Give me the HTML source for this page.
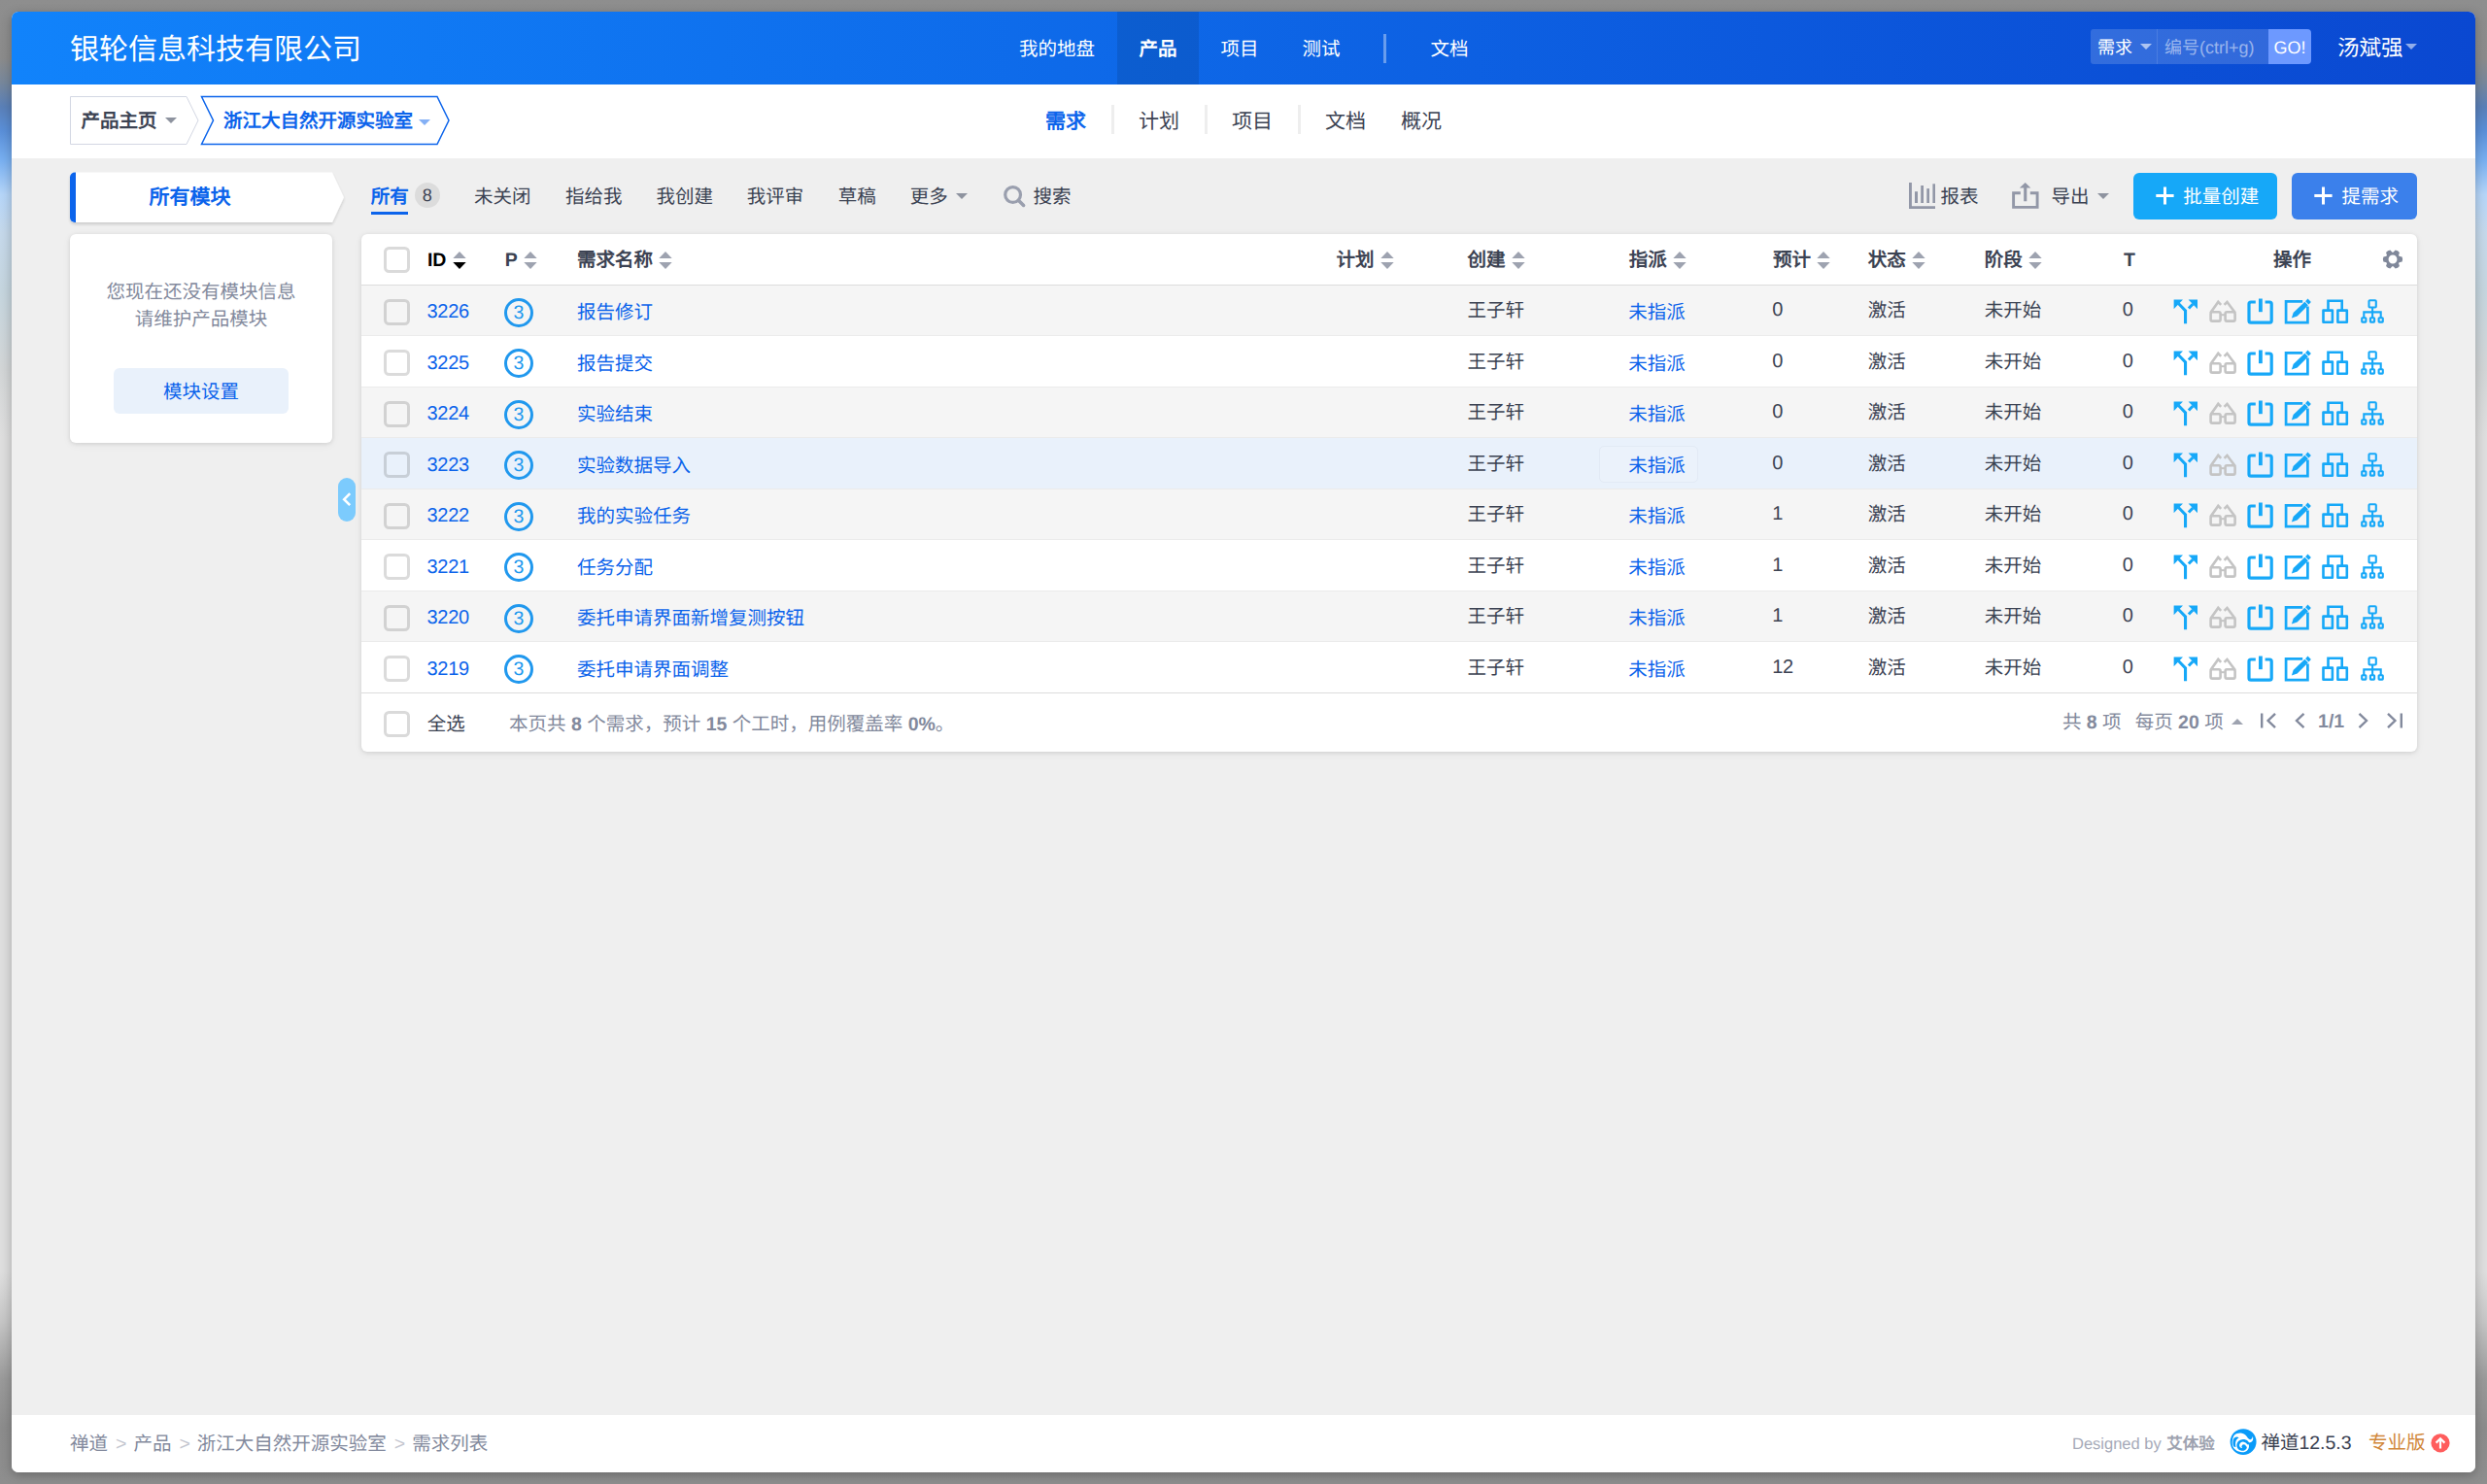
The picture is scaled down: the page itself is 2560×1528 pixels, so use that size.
<!DOCTYPE html>
<html lang="zh-CN">
<head>
<meta charset="utf-8">
<title>需求列表</title>
<style>
*{box-sizing:border-box;margin:0;padding:0}
html,body{width:2560px;height:1528px;overflow:hidden}
body{font-family:"Liberation Sans",sans-serif;font-size:19.5px;color:#3c4353;position:relative;text-rendering:geometricPrecision;
background:linear-gradient(to bottom,#8e8e8e 0px,#8b8b8b 60px,#77879b 85px,#5a80b8 110px,#5a8fd8 135px,#78aff0 165px,#b5d5f8 200px,#c5d8ea 240px,#c5d5de 300px,#d2d5d6 380px,#dedede 450px,#dedede 1310px,#c6c6c6 1360px,#9a9a9a 1420px,#8c8c8c 1470px,#8e8e8e 1528px);}
.abs,.t{position:absolute}
.t{white-space:nowrap}
#win{position:absolute;left:12px;top:12px;width:2536px;height:1504px;border-radius:7px;overflow:hidden;background:#efefef}
#winshadow{position:absolute;left:12px;top:12px;width:2536px;height:1504px;border-radius:7px;box-shadow:0 3px 11px rgba(0,0,0,.25)}
#header{position:absolute;left:0;top:0;width:2536px;height:75px;background:linear-gradient(to right,#1183fb 0%,#0a48d1 100%);color:#fff}
#title{position:absolute;left:60px;top:0;height:75px;line-height:79px;font-size:30px;white-space:nowrap}
.nav{position:absolute;top:0;height:75px;line-height:79px;text-align:center;font-size:19.5px;white-space:nowrap}
.nav.on{background:rgba(0,0,0,.10);font-weight:bold}
#sub{position:absolute;left:0;top:75px;width:2536px;height:76px;background:#fff}
.sn{position:absolute;top:0;height:76px;line-height:78.5px;font-size:21px;white-space:nowrap;color:#3c4353}
.sn.on{color:#0c64eb;font-weight:bold}
.sd{position:absolute;top:21px;width:3px;height:30px;background:#eee}
.caret{width:0;height:0;border-left:6px solid transparent;border-right:6px solid transparent;border-top:6px solid #8e939f}
#footer{position:absolute;left:0;top:1445px;width:2536px;height:59px;background:#fff;color:#838a9d;white-space:nowrap}
.tab{position:absolute;top:166.5px;height:48px;line-height:48px;white-space:nowrap;color:#3c4353}
.btn{position:absolute;top:166px;height:48px;border-radius:6px;color:#fff}
#table{position:absolute;left:360px;top:229px;width:2116px;height:533px;background:#fff;border-radius:6px;box-shadow:0 1px 4px rgba(0,0,0,.10),0 2px 10px rgba(0,0,0,.05);overflow:hidden}
.row{position:absolute;left:0;width:2116px;border-bottom:1px solid #ebebeb}
.row.g{background:#f5f5f5}
.row.h{background:#e9f1fb}
.row .t,.th{top:0;line-height:inherit}
.th{position:absolute;white-space:nowrap;font-weight:bold;color:#3c4353}
.cb{position:absolute;left:23px;width:27px;height:27px;border:3px solid rgba(0,0,0,.14);border-radius:5.5px}
.lk{color:#0c64eb}
.n{font-size:20px;letter-spacing:-.3px}
.row .n{top:-1px}
.row .u{top:-1.7px}
.row .u2{top:-2.7px}
.pri{position:absolute;left:147px;width:30px;height:30px;border:3px solid #2098ee;border-radius:50%;color:#2098ee;text-align:center;line-height:24.5px;font-size:19.5px}
.gray{color:#838a9d}
</style>
</head>
<body>

<svg width="0" height="0" style="position:absolute">
 <defs>
  <g id="i-split" fill="#16a8f8" stroke="none">
    <path d="M5.6 2.4H15V2.6L5.8 12H5.6Z"/>
    <path d="M20.6 2.4H30V11.9H29.8L20.6 2.6Z"/>
    <path d="M9.4 7.6L11.5 5.5L19.1 13.3V27.3H16V14.6Z"/>
    <path d="M24.2 5.9L26.4 8.1L22 12.6L19.8 10.4Z"/>
  </g>
  <g id="i-glass" fill="none" stroke="#c4c4c4" stroke-width="2.6" stroke-linejoin="round">
    <rect x="43.6" y="15.3" width="10" height="9.3" rx="1.6"/>
    <rect x="58.6" y="15.3" width="10" height="9.3" rx="1.6"/>
    <path d="M53.6 18.2H58.6" stroke-width="2"/>
    <path d="M43.4 16L51.3 4.9L54.2 7.9" stroke-linejoin="miter" stroke-linecap="butt"/>
    <path d="M68.8 16L60.5 4.9L57.6 7.9" stroke-linejoin="miter" stroke-linecap="butt"/>
  </g>
  <g id="i-power" fill="none" stroke="#16a8f8">
    <path d="M89.8 5H85A2 2 0 0 0 83 7V24.2A2 2 0 0 0 85 26.2H104.2A2 2 0 0 0 106.2 24.2V7A2 2 0 0 0 104.2 5H99.6" stroke-width="3.2"/>
    <path d="M94.9 1.5V15.2" stroke-width="3.8"/>
  </g>
  <g id="i-edit">
    <path d="M138.2 4.3H121.1V26.2H143.4V9.6" fill="none" stroke="#16a8f8" stroke-width="2.7"/>
    <path d="M126.9 21.4L128.6 15.9L140.4 4.8L143.9 8.3L132.7 19.6Z" fill="#16a8f8"/>
    <path d="M141.1 4.2L143.5 1.6L146.9 5L144.5 7.6Z" fill="#16a8f8"/>
  </g>
  <g id="i-boxes" fill="none" stroke="#16a8f8" stroke-width="2.6" stroke-linejoin="round">
    <rect x="159.5" y="13.6" width="9.4" height="12.1"/>
    <rect x="174.4" y="13.6" width="9.4" height="12.1"/>
    <path d="M164.5 13.5V3.8H178.7V13.5" stroke-linejoin="miter"/>
  </g>
  <g id="i-site" fill="none" stroke="#16a8f8" stroke-width="2.1" stroke-linejoin="round">
    <rect x="206.5" y="3.2" width="7.3" height="7.3" rx="1"/>
    <rect x="199.2" y="21.2" width="4.2" height="4.4" rx=".6"/>
    <rect x="207.9" y="21.2" width="4.2" height="4.4" rx=".6"/>
    <rect x="216.6" y="21.2" width="4.2" height="4.4" rx=".6"/>
    <path d="M210.1 10.5V21M201.3 21V15.4H218.7V21" stroke-linejoin="miter"/>
  </g>
  <g id="acts"><use href="#i-split"/><use href="#i-glass"/><use href="#i-power"/><use href="#i-edit"/><use href="#i-boxes"/><use href="#i-site"/></g>
 </defs>
</svg>
<div id="winshadow"></div>
<div id="win">
<div id="header">
<div id="title">银轮信息科技有限公司</div>
<div class="nav" style="left:1014px;width:124px">我的地盘</div>
<div class="nav on" style="left:1138px;width:84px">产品</div>
<div class="nav" style="left:1222px;width:84px">项目</div>
<div class="nav" style="left:1306px;width:84px">测试</div>
<div class="abs" style="left:1412px;top:23px;width:3px;height:30px;background:rgba(255,255,255,.38)"></div>
<div class="nav" style="left:1438px;width:84px">文档</div>
<div class="abs" style="left:2140px;top:18px;width:183px;height:36px;background:rgba(255,255,255,.16);border-radius:3px 0 0 3px"></div>
<div class="abs" style="left:2208px;top:18px;width:1px;height:36px;background:rgba(255,255,255,.12)"></div>
<div class="t" style="left:2147px;top:18px;height:36px;line-height:39px;font-size:18px">需求</div>
<div class="abs caret" style="left:2191px;top:33px;border-top-color:rgba(255,255,255,.6)"></div>
<div class="t" style="left:2216px;top:18px;height:36px;line-height:39px;font-size:18px;color:rgba(255,255,255,.5)">编号(ctrl+g)</div>
<div class="abs" style="left:2323px;top:18px;width:44px;height:36px;line-height:38px;font-size:18px;background:#6d99ff;border-radius:0 4px 4px 0;text-align:center">GO!</div>
<div class="t" style="left:2394px;top:0;height:75px;line-height:76px;font-size:22.5px">汤斌强</div>
<div class="abs caret" style="left:2464px;top:33px;border-top-color:rgba(255,255,255,.55)"></div>
</div>
<div id="sub">
<svg class="abs" style="left:0;top:0" width="520" height="76" viewBox="0 0 520 76">
<path d="M60.5 12.5H180L192 37L180 61.5H60.5Z" fill="#fff" stroke="#d3d7e3" stroke-width="1"/>
<path d="M195.5 12.5H438L450 37L438 61.5H195.5L207.5 37Z" fill="#fff" stroke="#0c64eb" stroke-width="1.5"/>
<path d="M158 34h12l-6 6z" fill="#8e939f"/>
<path d="M419 36h12l-6 6z" fill="#84b0f5"/>
</svg>
<div class="t" style="left:71.5px;top:12px;height:50px;line-height:53px;font-weight:bold;color:#3c4353">产品主页</div>
<div class="t" style="left:218px;top:12px;height:50px;line-height:53px;font-weight:bold;color:#0c64eb">浙江大自然开源实验室</div>
<div class="sn on" style="left:1064px">需求</div>
<div class="sd" style="left:1132px"></div>
<div class="sn" style="left:1160px">计划</div>
<div class="sd" style="left:1228px"></div>
<div class="sn" style="left:1256px">项目</div>
<div class="sd" style="left:1324px"></div>
<div class="sn" style="left:1352px">文档</div>
<div class="sn" style="left:1430px">概况</div>
</div>
<svg class="abs" style="left:54px;top:160px" width="300" height="66" viewBox="0 0 300 66">
<defs><filter id="sh1" x="-5%" y="-20%" width="110%" height="150%"><feGaussianBlur in="SourceAlpha" stdDeviation="1.6"/><feOffset dy="1.5"/><feComponentTransfer><feFuncA type="linear" slope=".16"/></feComponentTransfer><feMerge><feMergeNode/><feMergeNode in="SourceGraphic"/></feMerge></filter></defs>
<path d="M11 5.5H276L288 31.3L276 57H11A5 5 0 0 1 6 52V10.5A5 5 0 0 1 11 5.5Z" fill="#fff" filter="url(#sh1)"/>
<path d="M12 5.5H11A5 5 0 0 0 6 10.5V52A5 5 0 0 0 11 57H12Z" fill="#0c64eb"/>
</svg>
<div class="t" style="left:141.5px;top:165.5px;height:52px;line-height:51px;font-size:21px;font-weight:bold;color:#0c64eb">所有模块</div>
<div class="abs" style="left:60px;top:229px;width:270px;height:215px;background:#fff;border-radius:6px;box-shadow:0 1px 4px rgba(0,0,0,.10),0 2px 10px rgba(0,0,0,.05)"></div>
<div class="t gray" style="left:60px;top:274.5px;width:270px;text-align:center;line-height:28.3px">您现在还没有模块信息<br>请维护产品模块</div>
<div class="abs" style="left:105.3px;top:367px;width:179.5px;height:46.5px;background:#e9f1fb;border-radius:6px;color:#0c64eb;text-align:center;line-height:50px">模块设置</div>
<div class="abs" style="left:336px;top:480px;width:18px;height:44.5px;background:#7ccbfd;border-radius:9px"></div>
<svg class="abs" style="left:336px;top:480px" width="18" height="45" viewBox="0 0 18 45"><path d="M12.2 16.2L6.2 22.2L12.2 28.2" fill="none" stroke="#fff" stroke-width="2.6"/></svg>
<div class="tab" style="left:369.8px;font-weight:bold;color:#0c64eb">所有</div>
<div class="abs" style="left:369.8px;top:206px;width:38.6px;height:3px;background:#0c64eb"></div>
<div class="abs" style="left:414.8px;top:176.3px;width:26px;height:26px;border-radius:13px;background:#dcdcdc;text-align:center;line-height:26px;font-size:18px;color:#3c4353">8</div>
<div class="tab" style="left:476px">未关闭</div>
<div class="tab" style="left:569.9px">指给我</div>
<div class="tab" style="left:663.5px">我创建</div>
<div class="tab" style="left:756.8px">我评审</div>
<div class="tab" style="left:850.7px">草稿</div>
<div class="tab" style="left:924.7px">更多</div>
<div class="abs caret" style="left:972px;top:187px"></div>
<svg class="abs" style="left:1018px;top:176px" width="28" height="28" viewBox="0 0 28 28"><circle cx="12.6" cy="12.5" r="7.9" fill="none" stroke="#9a9fae" stroke-width="3.2"/><path d="M18.6 18.4L23.6 23.4" stroke="#9a9fae" stroke-width="3.6" stroke-linecap="round"/></svg>
<div class="tab" style="left:1051.5px">搜索</div>
<svg class="abs" style="left:1948px;top:172px" width="36" height="34" viewBox="0 0 36 34" fill="#9297a7"><path d="M5 4H7.9V28.2H32V30.9H5Z"/><rect x="11" y="13.2" width="3" height="11.8"/><rect x="17.2" y="7" width="2.8" height="18"/><rect x="23.3" y="10.1" width="2.7" height="14.9"/><rect x="29.4" y="5.3" width="2.6" height="19.7"/></svg>
<div class="tab" style="left:1985.5px">报表</div>
<svg class="abs" style="left:2056px;top:172px" width="36" height="34" viewBox="0 0 36 34"><path d="M11.8 14.8H4.6V29.4H29.1V14.8H21.8" fill="none" stroke="#9297a7" stroke-width="2.9"/><path d="M15.2 9.6H10.8L16.7 3.9L22.4 9.6H18.3V23.2H15.2Z" fill="#9297a7"/></svg>
<div class="tab" style="left:2099.5px">导出</div>
<div class="abs caret" style="left:2147px;top:187px"></div>
<div class="btn" style="left:2184px;width:148px;background:#16a8f8"></div>
<svg class="abs" style="left:2206px;top:179px" width="22" height="22" viewBox="0 0 22 22"><path d="M1.3 10.5H19.6M10.5 1.4V19.5" stroke="#fff" stroke-width="3"/></svg>
<div class="tab" style="left:2235.3px;color:#fff">批量创建</div>
<div class="btn" style="left:2347px;width:129px;background:#3b80eb"></div>
<svg class="abs" style="left:2369px;top:179px" width="22" height="22" viewBox="0 0 22 22"><path d="M1.3 10.5H19.6M10.5 1.4V19.5" stroke="#fff" stroke-width="3"/></svg>
<div class="tab" style="left:2398.6px;color:#fff">提需求</div>
<div id="table">
<div class="abs" style="left:0;top:0;width:2116px;height:53px;border-bottom:1px solid #dcdcdc;line-height:54px">
<div class="cb" style="top:13px;border-color:#dadada"></div>
<div class="th" style="left:67.9px;top:0;color:#000">ID</div><svg class="abs" style="left:94.0px;top:18px" width="14" height="19" viewBox="0 0 14 19"><path d="M0.3 7L7 0.1L13.7 7Z" fill="#9ea3b0"/><path d="M0.3 11L7 17.9L13.7 11Z" fill="#000"/></svg>
<div class="th" style="left:147.8px;top:0">P</div><svg class="abs" style="left:167.0px;top:18px" width="14" height="19" viewBox="0 0 14 19"><path d="M0.3 7L7 0.1L13.7 7Z" fill="#9ea3b0"/><path d="M0.3 11L7 17.9L13.7 11Z" fill="#9ea3b0"/></svg>
<div class="th" style="left:222px;top:0">需求名称</div><svg class="abs" style="left:306.3px;top:18px" width="14" height="19" viewBox="0 0 14 19"><path d="M0.3 7L7 0.1L13.7 7Z" fill="#9ea3b0"/><path d="M0.3 11L7 17.9L13.7 11Z" fill="#9ea3b0"/></svg>
<div class="th" style="left:1003.4px;top:0">计划</div><svg class="abs" style="left:1048.7px;top:18px" width="14" height="19" viewBox="0 0 14 19"><path d="M0.3 7L7 0.1L13.7 7Z" fill="#9ea3b0"/><path d="M0.3 11L7 17.9L13.7 11Z" fill="#9ea3b0"/></svg>
<div class="th" style="left:1138.5px;top:0">创建</div><svg class="abs" style="left:1183.8px;top:18px" width="14" height="19" viewBox="0 0 14 19"><path d="M0.3 7L7 0.1L13.7 7Z" fill="#9ea3b0"/><path d="M0.3 11L7 17.9L13.7 11Z" fill="#9ea3b0"/></svg>
<div class="th" style="left:1304.8px;top:0">指派</div><svg class="abs" style="left:1350.1px;top:18px" width="14" height="19" viewBox="0 0 14 19"><path d="M0.3 7L7 0.1L13.7 7Z" fill="#9ea3b0"/><path d="M0.3 11L7 17.9L13.7 11Z" fill="#9ea3b0"/></svg>
<div class="th" style="left:1453px;top:0">预计</div><svg class="abs" style="left:1498.3px;top:18px" width="14" height="19" viewBox="0 0 14 19"><path d="M0.3 7L7 0.1L13.7 7Z" fill="#9ea3b0"/><path d="M0.3 11L7 17.9L13.7 11Z" fill="#9ea3b0"/></svg>
<div class="th" style="left:1550.8px;top:0">状态</div><svg class="abs" style="left:1596.1px;top:18px" width="14" height="19" viewBox="0 0 14 19"><path d="M0.3 7L7 0.1L13.7 7Z" fill="#9ea3b0"/><path d="M0.3 11L7 17.9L13.7 11Z" fill="#9ea3b0"/></svg>
<div class="th" style="left:1670.8px;top:0">阶段</div><svg class="abs" style="left:1716.1px;top:18px" width="14" height="19" viewBox="0 0 14 19"><path d="M0.3 7L7 0.1L13.7 7Z" fill="#9ea3b0"/><path d="M0.3 11L7 17.9L13.7 11Z" fill="#9ea3b0"/></svg>
<div class="th" style="left:1814px;top:0">T</div>
<div class="th" style="left:1967.9px;top:0">操作</div>
<svg class="abs" style="left:2078.9px;top:13.8px" width="24" height="24" viewBox="-12 -12 24 24"><g fill="#80889a"><path id="gt" d="M5.2 -3.4L9.6 -2.5Q10.7 0 9.6 2.5L5.2 3.4Z"/><use href="#gt" transform="rotate(60)"/><use href="#gt" transform="rotate(120)"/><use href="#gt" transform="rotate(180)"/><use href="#gt" transform="rotate(240)"/><use href="#gt" transform="rotate(300)"/></g><circle r="5.9" fill="none" stroke="#80889a" stroke-width="2.9"/></svg>
</div>
<div class="row g" style="top:53px;height:52px;line-height:57.6px"><div class="cb" style="top:14px"></div><div class="t lk n" style="left:67.5px">3226</div><div class="pri" style="top:13px">3</div><div class="t lk" style="left:222px">报告修订</div><div class="t u" style="left:1138.5px">王子轩</div><div class="t lk" style="left:1304.3px">未指派</div><div class="t n u2" style="left:1452.3px">0</div><div class="t u" style="left:1550.8px">激活</div><div class="t u" style="left:1670.8px">未开始</div><div class="t n u2" style="left:1812.8px">0</div><svg class="abs" style="left:1860px;top:12.1px" width="230" height="30" viewBox="0 0 230 30"><use href="#acts"/></svg></div>
<div class="row" style="top:105px;height:53px;line-height:58.6px"><div class="cb" style="top:14px"></div><div class="t lk n" style="left:67.5px">3225</div><div class="pri" style="top:13px">3</div><div class="t lk" style="left:222px">报告提交</div><div class="t u" style="left:1138.5px">王子轩</div><div class="t lk" style="left:1304.3px">未指派</div><div class="t n u2" style="left:1452.3px">0</div><div class="t u" style="left:1550.8px">激活</div><div class="t u" style="left:1670.8px">未开始</div><div class="t n u2" style="left:1812.8px">0</div><svg class="abs" style="left:1860px;top:12.8px" width="230" height="30" viewBox="0 0 230 30"><use href="#acts"/></svg></div>
<div class="row g" style="top:158px;height:52px;line-height:57.6px"><div class="cb" style="top:14px"></div><div class="t lk n" style="left:67.5px">3224</div><div class="pri" style="top:13px">3</div><div class="t lk" style="left:222px">实验结束</div><div class="t u" style="left:1138.5px">王子轩</div><div class="t lk" style="left:1304.3px">未指派</div><div class="t n u2" style="left:1452.3px">0</div><div class="t u" style="left:1550.8px">激活</div><div class="t u" style="left:1670.8px">未开始</div><div class="t n u2" style="left:1812.8px">0</div><svg class="abs" style="left:1860px;top:12.1px" width="230" height="30" viewBox="0 0 230 30"><use href="#acts"/></svg></div>
<div class="row h" style="top:210px;height:53px;line-height:58.6px"><div class="cb" style="top:14px"></div><div class="t lk n" style="left:67.5px">3223</div><div class="pri" style="top:13px">3</div><div class="t lk" style="left:222px">实验数据导入</div><div class="t u" style="left:1138.5px">王子轩</div><div class="abs" style="left:1273.5px;top:8px;width:102px;height:38px;border:1px solid #e2eaf5;border-radius:5px;background:#ebf2fb"></div><div class="t lk" style="left:1304.3px">未指派</div><div class="t n u2" style="left:1452.3px">0</div><div class="t u" style="left:1550.8px">激活</div><div class="t u" style="left:1670.8px">未开始</div><div class="t n u2" style="left:1812.8px">0</div><svg class="abs" style="left:1860px;top:12.8px" width="230" height="30" viewBox="0 0 230 30"><use href="#acts"/></svg></div>
<div class="row g" style="top:263px;height:52px;line-height:57.6px"><div class="cb" style="top:14px"></div><div class="t lk n" style="left:67.5px">3222</div><div class="pri" style="top:13px">3</div><div class="t lk" style="left:222px">我的实验任务</div><div class="t u" style="left:1138.5px">王子轩</div><div class="t lk" style="left:1304.3px">未指派</div><div class="t n u2" style="left:1452.3px">1</div><div class="t u" style="left:1550.8px">激活</div><div class="t u" style="left:1670.8px">未开始</div><div class="t n u2" style="left:1812.8px">0</div><svg class="abs" style="left:1860px;top:12.1px" width="230" height="30" viewBox="0 0 230 30"><use href="#acts"/></svg></div>
<div class="row" style="top:315px;height:53px;line-height:58.6px"><div class="cb" style="top:14px"></div><div class="t lk n" style="left:67.5px">3221</div><div class="pri" style="top:13px">3</div><div class="t lk" style="left:222px">任务分配</div><div class="t u" style="left:1138.5px">王子轩</div><div class="t lk" style="left:1304.3px">未指派</div><div class="t n u2" style="left:1452.3px">1</div><div class="t u" style="left:1550.8px">激活</div><div class="t u" style="left:1670.8px">未开始</div><div class="t n u2" style="left:1812.8px">0</div><svg class="abs" style="left:1860px;top:12.8px" width="230" height="30" viewBox="0 0 230 30"><use href="#acts"/></svg></div>
<div class="row g" style="top:368px;height:52px;line-height:57.6px"><div class="cb" style="top:14px"></div><div class="t lk n" style="left:67.5px">3220</div><div class="pri" style="top:13px">3</div><div class="t lk" style="left:222px">委托申请界面新增复测按钮</div><div class="t u" style="left:1138.5px">王子轩</div><div class="t lk" style="left:1304.3px">未指派</div><div class="t n u2" style="left:1452.3px">1</div><div class="t u" style="left:1550.8px">激活</div><div class="t u" style="left:1670.8px">未开始</div><div class="t n u2" style="left:1812.8px">0</div><svg class="abs" style="left:1860px;top:12.1px" width="230" height="30" viewBox="0 0 230 30"><use href="#acts"/></svg></div>
<div class="row" style="top:420px;height:53px;line-height:58.6px;border-bottom-color:#dcdcdc"><div class="cb" style="top:14px"></div><div class="t lk n" style="left:67.5px">3219</div><div class="pri" style="top:13px">3</div><div class="t lk" style="left:222px">委托申请界面调整</div><div class="t u" style="left:1138.5px">王子轩</div><div class="t lk" style="left:1304.3px">未指派</div><div class="t n u2" style="left:1452.3px">12</div><div class="t u" style="left:1550.8px">激活</div><div class="t u" style="left:1670.8px">未开始</div><div class="t n u2" style="left:1812.8px">0</div><svg class="abs" style="left:1860px;top:12.8px" width="230" height="30" viewBox="0 0 230 30"><use href="#acts"/></svg></div>
<div class="abs" style="left:0;top:473px;width:2116px;height:60px;line-height:65px"><div class="cb" style="top:18px;border-color:#dadada"></div><div class="t" style="left:67.8px;top:0">全选</div><div class="t gray" style="left:152px;top:0">本页共 <b>8</b> 个需求，预计 <b>15</b> 个工时，用例覆盖率 <b>0%</b>。</div><div class="t gray" style="left:1750.9px;top:0;line-height:60.5px">共 <b>8</b> 项</div><div class="t gray" style="left:1825.7px;top:0;line-height:60.5px">每页 <b>20</b> 项</div><div class="abs" style="left:1925.2px;top:25.5px;width:0;height:0;border-left:6px solid transparent;border-right:6px solid transparent;border-bottom:6px solid #9ea3b0"></div><svg class="abs" style="left:1948px;top:15px" width="160" height="26" viewBox="0 0 160 26" fill="none" stroke="#838a9d" stroke-width="2.4"><path d="M8.2 5.5V20.5M22 5.8L14.6 13L22 20.2"/><path d="M51.5 5.8L44 13L51.5 20.2"/><path d="M108.5 5.8L116 13L108.5 20.2"/><path d="M138 5.8L145.4 13L138 20.2M151.8 5.5V20.5"/></svg><div class="t gray" style="left:2014.1px;top:0;font-weight:bold;line-height:59px">1/1</div></div>
</div>
<div id="footer">
<div class="t" style="left:60px;top:0;line-height:61.5px">禅道<span style="color:#c4c6cf;padding:0 7px 0 8px">&gt;</span>产品<span style="color:#c4c6cf;padding:0 7px 0 8px">&gt;</span>浙江大自然开源实验室<span style="color:#c4c6cf;padding:0 7px 0 8px">&gt;</span>需求列表</div>
<div class="t" style="left:2121px;top:0;line-height:60px;font-size:16.5px;color:#a6aab8">Designed by <b style="color:#9ea3b0;padding-left:1px">艾体验</b></div>
<svg class="abs" style="left:2283.4px;top:13.6px" width="28" height="28" viewBox="0 0 28 28"><circle cx="14.1" cy="13.6" r="13.45" fill="#0a9bf9"/><path d="M3.7 19C2.6 16.8 2.4 14.4 2.9 12C3.2 10.4 3.6 9.2 4.1 8C4.9 6.7 5.8 5.9 7 5.3C8.5 4.6 10.1 4.3 11.7 4.4C13.1 4.6 14.3 5 15.3 5.7C16.2 6.3 17 7.1 17.7 8C18.4 9 19 9.9 19.7 10.6C20.3 11.1 20.9 11.3 21.5 11.2C22.1 11.1 22.6 10.8 23 10.3C23.4 9.7 23.6 8.9 23.7 8C24.2 8.8 24.3 9.8 24.2 10.7C24.1 11.6 23.8 12.4 23.3 13C22.8 13.6 22.1 14 21.2 14.2C20.3 14.4 19.3 14.4 18.3 14.4C18.9 14.8 19.2 15.4 19.5 16C19.9 16.9 20.1 17.8 20 18.7C19.9 19.8 19.5 20.8 18.8 21.7C18.1 22.6 17.2 23.3 16.1 23.7C15.1 24.1 14 24.3 12.9 24.2C11.7 24.1 10.5 23.9 9.4 23.5C8.3 23.1 7.3 22.6 6.4 21.9C5.6 21.3 4.9 20.6 4.3 19.9Z" fill="#fff"/><path d="M5.2 9.2C5.9 8.7 6.7 8.5 7.6 8.45C8.2 8.5 8.8 8.6 9.35 8.9C9.4 9.2 9.3 9.5 9.05 9.8C8.5 10.1 8 10.5 7.6 11C7 11.7 6.6 12.5 6.4 13.3C6.1 14.3 6 15.3 6.1 16.3C6.1 17.1 6.2 17.9 6.4 18.7C6.1 18.9 5.8 19.1 5.5 19.1C4.9 18.9 4.4 18.6 4 18.1C3.6 17.1 3.4 16.1 3.4 15.1C3.4 13.9 3.5 12.7 3.7 11.6C4 10.7 4.5 9.9 5.2 9.2Z" fill="#0a9bf9"/><path d="M19 15C17.2 12.3 13.2 11.2 10.5 13.5C7.6 16 8.4 20.3 12 21.3C14.3 21.9 16.4 20.6 16.5 19.3" fill="none" stroke="#0a9bf9" stroke-width="2.7" stroke-linecap="round"/><circle cx="14.7" cy="18.5" r="2.2" fill="#0a9bf9"/></svg>
<div class="t" style="left:2315.4px;top:0;line-height:58px;color:#3c4353">禅道12.5.3</div>
<div class="t" style="left:2426px;top:0;line-height:58px;color:#d1873a">专业版</div>
<svg class="abs" style="left:2489.5px;top:18.5px" width="20" height="20" viewBox="0 0 20 20"><circle cx="10" cy="9.8" r="9.6" fill="#ff5d5d"/><path d="M10 15.6V5.6M5.6 9.6L10 5.2L14.4 9.6" fill="none" stroke="#fff" stroke-width="2.2"/></svg>
</div>
</div>
</body>
</html>
